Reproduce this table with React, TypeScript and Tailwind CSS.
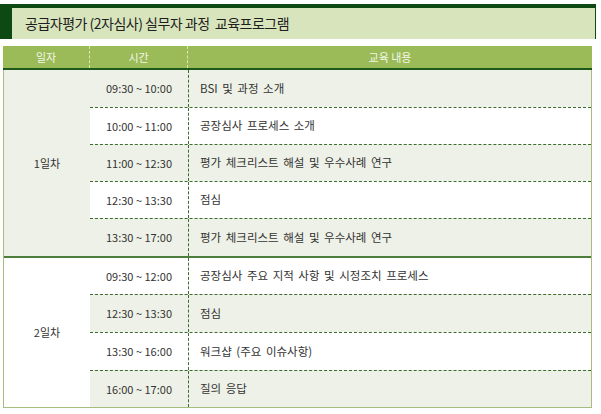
import React from "react"

type Row = { time: string; topic: string; tint: boolean; h: string }

const day1: Row[] = [
  { time: "09:30 ~ 10:00", topic: "BSI 및 과정 소개", tint: true, h: "h-[37px]" },
  { time: "10:00 ~ 11:00", topic: "공장심사 프로세스 소개", tint: false, h: "h-[37px]" },
  { time: "11:00 ~ 12:30", topic: "평가 체크리스트 해설 및 우수사례 연구", tint: true, h: "h-[37px]" },
  { time: "12:30 ~ 13:30", topic: "점심", tint: false, h: "h-[37px]" },
  { time: "13:30 ~ 17:00", topic: "평가 체크리스트 해설 및 우수사례 연구", tint: true, h: "h-[38px]" },
]

const day2: Row[] = [
  { time: "09:30 ~ 12:00", topic: "공장심사 주요 지적 사항 및 시정조치 프로세스", tint: false, h: "h-[36px]" },
  { time: "12:30 ~ 13:30", topic: "점심", tint: true, h: "h-[38px]" },
  { time: "13:30 ~ 16:00", topic: "워크샵 (주요 이슈사항)", tint: false, h: "h-[38px]" },
  { time: "16:00 ~ 17:00", topic: "질의 응답", tint: true, h: "h-[37px]" },
]

function DayBlock({ label, rows, tint }: { label: string; rows: Row[]; tint: boolean }) {
  return (
    <div className="flex">
      <div className={`w-[86px] flex items-center justify-center ${tint ? "bg-[#eef1e7]" : "bg-white"}`}>
        {label}
      </div>
      <div className="flex-1 flex flex-col">
        {rows.map((r, i) => (
          <div
            key={i}
            className={`flex ${r.h} ${i > 0 ? "border-t border-dashed border-[#3d6b2e]" : ""} ${r.tint ? "bg-[#eef1e7]" : "bg-white"}`}
          >
            <div className="w-[98px] flex items-center justify-center">{r.time}</div>
            <div className="flex-1 flex items-center pl-[11px] border-l border-dashed border-[#3d6b2e] text-[11.5px] [word-spacing:2px]">
              {r.topic}
            </div>
          </div>
        ))}
      </div>
    </div>
  )
}

export default function App() {
  return (
    <div
      className="w-[601px] h-[414px] bg-white pt-[4px] text-[11px] text-[#333333]"
      style={{ fontFamily: '"Noto Sans CJK KR", "Liberation Sans", sans-serif' }}
    >
      {/* Title */}
      <div className="w-[596px] h-[35px] bg-[#d8e4bc] border-t-4 border-l-[12px] border-r border-[#0d4a13] flex items-center pl-[13px] text-[14px] text-[#1e1e1e] tracking-[-0.5px]">
        공급자평가 (2자심사) 실무자 과정&nbsp; 교육프로그램
      </div>

      {/* Table */}
      <div className="ml-[3px] mt-[7px] w-[589px]">
        <div className="flex h-[24px] bg-[#9bbb59] border-b-2 border-[#1d5a1a] text-[#f3f7e6] text-[11px]">
          <div className="w-[87px] flex items-center justify-center border-r border-dashed border-[#dbe9b0]">일자</div>
          <div className="w-[98px] flex items-center justify-center border-r border-dashed border-[#dbe9b0]">시간</div>
          <div className="flex-1 flex items-center justify-center">교육 내용</div>
        </div>
        <div className="border-l border-r border-b border-[#a8bd7d]">
          <DayBlock label="1일차" rows={day1} tint={true} />
          <div className="h-[2px] bg-[#4d7e3b]" />
          <DayBlock label="2일차" rows={day2} tint={false} />
        </div>
      </div>
    </div>
  )
}
